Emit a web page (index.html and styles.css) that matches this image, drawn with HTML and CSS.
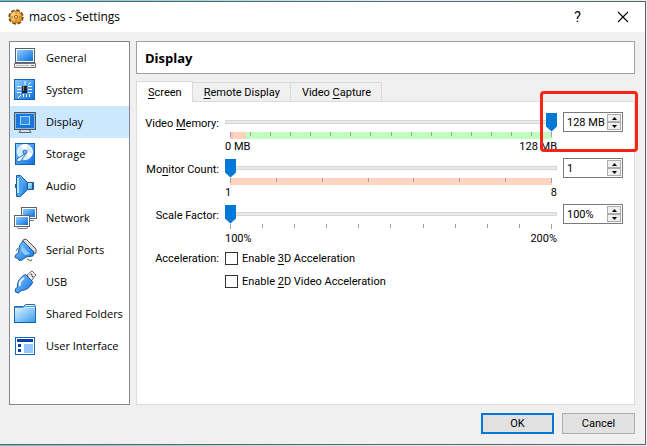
FILE: index.html
```html
<!DOCTYPE html>
<html lang="en">
<head>
    <meta charset="UTF-8">
    <meta name="viewport" content="width=device-width, initial-scale=1.0">
    <title>macos - Settings</title>
    <link rel="stylesheet" href="styles.css">
</head>
<body>
    <svg class="defs" width="0" height="0" aria-hidden="true">
        <defs>
            <linearGradient id="blue" x1="0" y1="0" x2="1" y2="1">
                <stop offset="0" stop-color="#8fccff"/>
                <stop offset="1" stop-color="#0b6fe0"/>
            </linearGradient>
            <linearGradient id="sky" x1="0" y1="0" x2="1" y2="1">
                <stop offset="0" stop-color="#d8f1ff"/>
                <stop offset="1" stop-color="#3d9cf0"/>
            </linearGradient>
            <linearGradient id="gold" x1="0" y1="0" x2="1" y2="1">
                <stop offset="0" stop-color="#ffe9a0"/>
                <stop offset="1" stop-color="#e88a00"/>
            </linearGradient>
        </defs>
    </svg>
    <div class="window">
        <header class="titlebar">
            <svg class="app-icon" width="16" height="16" viewBox="0 0 16 16">
                <circle cx="8" cy="8" r="6.800" fill="none" stroke="#7d4a10" stroke-width="1.800" stroke-dasharray="3.600 1.740"/>
                <circle cx="8" cy="8" r="6" fill="url(#gold)" stroke="#a8691a"/>
                <circle cx="8" cy="8" r="1.500" fill="#fff" stroke="#8a5412"/>
                <path d="M8 3v2M3 8h2M11 8h2M8 11v2" stroke="#b87414"/>
            </svg>
            <h1>macos - Settings</h1>
            <button class="title-button help" type="button" aria-label="Help">?</button>
            <button class="title-button" type="button" aria-label="Close">
                <svg width="12" height="12" viewBox="0 0 12 12"><path d="M1 1l10 10M11 1L1 11" stroke="#000" stroke-width="1.100"/></svg>
            </button>
        </header>
        <div class="content">
            <nav class="sidebar">
                <a href="#general">
                    <svg width="24" height="24" viewBox="0 0 24 24">
                        <rect x="2.500" y="2.500" width="19" height="14" fill="#fff" stroke="#566069"/>
                        <rect x="4" y="4" width="16" height="11" fill="url(#blue)"/>
                        <path d="M1.500 17.500h21v4h-21z" fill="#f2f2ee" stroke="#6c706e"/>
                        <path d="M3 19.500h13" stroke="#b8bab4"/><path d="M18 19.500h3" stroke="#777"/>
                    </svg>
                    General
                </a>
                <a href="#system">
                    <svg width="24" height="24" viewBox="0 0 24 24">
                        <rect x="1.500" y="1.500" width="20" height="20" fill="url(#blue)" stroke="#1263b4"/>
                        <rect x="9" y="8" width="5" height="7" fill="#222"/><path d="M10.500 8v5" stroke="#777"/>
                        <path d="M4 8.500h4M4 11.500h4M4 14.500h4M15 8.500h4M15 11.500h4M15 14.500h4M10.500 16v3M13.500 16v3M8 17l-3 3M16.500 16v3M12 3v4M18 4l-3 3" stroke="#fff"/>
                    </svg>
                    System
                </a>
                <a class="selected" href="#display">
                    <svg width="24" height="24" viewBox="0 0 24 24">
                        <path d="M6 22.500h12l-2-3H8z" fill="#ddd" stroke="#50677c"/>
                        <rect x="1.500" y="2.500" width="21" height="17" fill="#9bb6cc" stroke="#3d5870"/>
                        <rect x="3" y="4" width="18" height="14" fill="#1777df"/>
                        <rect x="7.500" y="6.500" width="9" height="8" fill="#2f8ef0" stroke="#a9d5ff"/>
                    </svg>
                    Display
                </a>
                <a href="#storage">
                    <svg width="24" height="24" viewBox="0 0 24 24">
                        <rect x="2.500" y="1.500" width="19" height="21" fill="url(#blue)" stroke="#1261b0"/>
                        <circle cx="12" cy="10" r="7.500" fill="#cfeaff" stroke="#fff"/>
                        <path d="M12 10l-4-6a7 7 0 0 1 7-1zM12 10l4 6a7 7 0 0 0 3-5z" fill="#fff"/>
                        <circle cx="12" cy="10" r="2" fill="#80bdf2" stroke="#276eb5"/>
                        <path d="M13 11l-5 8-4 1v-3l6-4z" fill="#eef8ff" stroke="#2a78c2"/>
                    </svg>
                    Storage
                </a>
                <a href="#audio">
                    <svg width="24" height="24" viewBox="0 0 24 24">
                        <path d="M14 8.500h6.500v7H14z" fill="url(#sky)" stroke="#195d9d"/>
                        <path d="M19.500 8v8" stroke="#195d9d"/>
                        <path d="M3.500 1.500h4l7 7v7l-7 7h-4z" fill="url(#blue)" stroke="#195d9d"/>
                        <path d="M4 2h3l2 4v12l-2 4H4z" fill="#4ba4f2"/>
                        <path d="M5 4v15" fill="none" stroke="#b9e1ff" stroke-width="2"/>
                        <path d="M2.500 10v4" stroke="#195d9d"/>
                    </svg>
                    Audio
                </a>
                <a href="#network">
                    <svg width="24" height="24" viewBox="0 0 24 24">
                        <rect x="8.500" y="1.500" width="15" height="11" fill="#fff" stroke="#5d656b"/>
                        <rect x="10" y="3" width="12" height="8" fill="url(#blue)"/>
                        <path d="M17 14.500h4" stroke="#777"/>
                        <rect x="1.500" y="9.500" width="15" height="11" fill="#fff" stroke="#5d656b"/>
                        <rect x="3" y="11" width="12" height="8" fill="url(#blue)"/>
                        <path d="M4 21.500l2 1h7l2-1" fill="none" stroke="#777"/>
                    </svg>
                    Network
                </a>
                <a href="#serial">
                    <svg width="24" height="24" viewBox="0 0 24 24">
                        <path d="M10 2l3-1 10 10v4l-2 1-12-11z" fill="#ddd" stroke="#555"/>
                        <path d="M10 3l11 11-1 4-7 1-4 3-3 .5-1-2-3-1 .5-2.500 3-2.500 1-7z" fill="url(#blue)" stroke="#155a9f"/>
                        <path d="M9 8l8 8-5 1-4-4z" fill="#8dcbff"/>
                        <path d="M14 21l4 2 1-2M3 13l2-3" fill="none" stroke="#666"/>
                    </svg>
                    Serial Ports
                </a>
                <a href="#usb">
                    <svg width="24" height="24" viewBox="0 0 24 24">
                        <path d="M14 5l5-4 4 4-5 6z" fill="#f5f5f5" stroke="#666"/>
                        <path d="M18 4l1 1M20 6l-1 1" stroke="#333" stroke-width="1.500"/>
                        <path d="M12.500 4.500l7 7c0 4-6 9-11 9l-3 2.500-3-1 0-3 2-2c-1-5 4-11 8-12.500z" fill="url(#blue)" stroke="#155a9f"/>
                        <path d="M11 8c-3 2-5 5-4 8" fill="none" stroke="#e9f8ff" stroke-width="2"/>
                    </svg>
                    USB
                </a>
                <a href="#folders">
                    <svg width="24" height="24" viewBox="0 0 24 24">
                        <path d="M1.500 20.500v-16h9l2-2h9l1 2v16z" fill="#d9f1ff" stroke="#1c6cb3"/>
                        <path d="M2 6h20v14H2z" fill="url(#sky)"/>
                        <path d="M2 5.500h8l2-1h10" fill="none" stroke="#4e9ddb"/>
                        <path d="M1 20.500h22" stroke="#0a62ae"/>
                    </svg>
                    Shared Folders
                </a>
                <a href="#interface">
                    <svg width="24" height="24" viewBox="0 0 24 24">
                        <rect x="2.500" y="3.500" width="19" height="17" fill="#fff" stroke="#1267c8"/>
                        <path d="M4 5h16v3H4z" fill="#0541a5"/>
                        <path d="M5 10h3v3H5zM5 15h3v3H5z" fill="#0541a5"/>
                        <path d="M11 10h9v9h-9z" fill="#94c5ff"/>
                    </svg>
                    User Interface
                </a>
            </nav>
            <main class="main">
                <h2>Display</h2>
                <div class="tabs" role="tablist">
                    <button class="tab active" type="button" role="tab" aria-selected="true"><u>S</u>creen</button>
                    <button class="tab" type="button" role="tab" aria-selected="false"><u>R</u>emote Display</button>
                    <button class="tab" type="button" role="tab" aria-selected="false">Video <u>C</u>apture</button>
                </div>
                <form class="panel">
                    <label class="name" for="memory">Video <u>M</u>emory:</label>
                    <div class="slider">
                        <input id="memory" type="range" min="0" max="128" value="128">
                        <div class="scale memory">
                            <i></i><i></i><i></i><i></i><i></i><i></i><i></i><i></i><i></i><i></i><i></i><i></i><i></i><i></i><i></i><i></i><i></i>
                        </div>
                        <div class="limits"><span>0 MB</span><span>128 MB</span></div>
                    </div>
                    <div class="spin marked">
                        <input type="text" value="128 MB" aria-label="Video memory size">
                        <div class="arrows">
                            <button type="button" aria-label="Increase"><svg width="5" height="3"><path d="M0 3h5L2.500 0z"/></svg></button>
                            <button type="button" aria-label="Decrease"><svg width="5" height="3"><path d="M0 0h5L2.500 3z"/></svg></button>
                        </div>
                    </div>

                    <label class="name" for="monitors">Mo<u>n</u>itor Count:</label>
                    <div class="slider">
                        <input id="monitors" type="range" min="1" max="8" value="1">
                        <div class="scale monitors">
                            <i></i><i></i><i></i><i></i><i></i><i></i><i></i><i></i>
                        </div>
                        <div class="limits"><span>1</span><span>8</span></div>
                    </div>
                    <div class="spin">
                        <input type="text" value="1" aria-label="Number of monitors">
                        <div class="arrows">
                            <button type="button" aria-label="Increase"><svg width="5" height="3"><path d="M0 3h5L2.500 0z"/></svg></button>
                            <button type="button" aria-label="Decrease"><svg width="5" height="3"><path d="M0 0h5L2.500 3z"/></svg></button>
                        </div>
                    </div>

                    <label class="name" for="factor">Scale Factor:</label>
                    <div class="slider">
                        <input id="factor" type="range" min="100" max="200" value="100">
                        <div class="scale">
                            <i></i><i></i><i></i><i></i><i></i><i></i><i></i><i></i><i></i><i></i><i></i>
                        </div>
                        <div class="limits"><span>100%</span><span>200%</span></div>
                    </div>
                    <div class="spin">
                        <input type="text" value="100%" aria-label="Scale factor percent">
                        <div class="arrows">
                            <button type="button" aria-label="Increase"><svg width="5" height="3"><path d="M0 3h5L2.500 0z"/></svg></button>
                            <button type="button" aria-label="Decrease"><svg width="5" height="3"><path d="M0 0h5L2.500 3z"/></svg></button>
                        </div>
                    </div>

                    <span class="name accel">Acceleration:</span>
                    <div class="checks">
                        <label><input type="checkbox">Enable <u>3</u>D Acceleration</label>
                        <label><input type="checkbox">Enable <u>2</u>D Video Acceleration</label>
                    </div>
                </form>
            </main>
        </div>
        <footer class="footer">
            <button class="ok" type="button">OK</button>
            <button type="button">Cancel</button>
        </footer>
    </div>
</body>
</html>
```
FILE: styles.css
```css
* {
    margin: 0;
    padding: 0;
    box-sizing: border-box;
}

body {
    height: 100vh;
    padding: 1px 1px 1px 0;
    background: linear-gradient(90deg, #62c4d4, #d5f3f3 60%, #e4eeee);
    font-family: Roboto, "Noto Sans", sans-serif;
    font-size: 11px;
    line-height: 16px;
    color: #000;
}

.defs {
    position: absolute;
}

button, input {
    font: inherit;
    color: inherit;
}

u {
    text-underline-offset: 2px;
}

.window {
    height: 100%;
    display: flex;
    flex-direction: column;
    background: #f0f0f0;
    border: 1px solid #5c6468;
    border-left: 0;
}

/* title bar */
.titlebar {
    height: 30px;
    display: flex;
    align-items: center;
    background: #fff;
    padding-left: 8px;
}

.titlebar h1 {
    flex: 1;
    margin-left: 5px;
    font-family: "Open Sans", sans-serif;
    font-size: 12px;
    font-weight: normal;
}

.title-button {
    width: 45px;
    height: 30px;
    border: none;
    background: none;
    display: flex;
    align-items: center;
    justify-content: center;
}

.help {
    font-size: 14px;
}

.content {
    flex: 1;
    display: flex;
    gap: 6px;
    padding: 9px 10px 0 9px;
}

/* category list */
.sidebar {
    width: 121px;
    background: #fff;
    border: 1px solid #828790;
}

.sidebar a {
    display: flex;
    align-items: center;
    gap: 9px;
    height: 32px;
    padding-left: 3px;
    font-family: "Open Sans", sans-serif;
    line-height: 18px;
    color: #000;
    text-decoration: none;
    white-space: nowrap;
}

.sidebar svg {
    flex: none;
}

.sidebar .selected {
    background: #cce8ff;
}

.main {
    flex: 1;
    min-width: 0;
    display: flex;
    flex-direction: column;
}

.main h2 {
    height: 33px;
    padding-left: 8px;
    background: #fff;
    border: 1px solid #a0a0a0;
    font-family: "Open Sans", sans-serif;
    font-size: 13px;
    line-height: 33px;
}

/* tabs */
.tabs {
    display: flex;
    align-items: flex-end;
    margin-top: 7px;
}

.tab {
    height: 19px;
    padding: 2px 10px 0 11px;
    background: #f0f0f0;
    border: 1px solid #d9d9d9;
    border-left: 0;
    border-bottom: 0;
}

.tab.active {
    height: 21px;
    background: #fff;
    border-left: 1px solid #d9d9d9;
    margin-bottom: -1px;
    z-index: 1;
}

.panel {
    flex: 1;
    display: grid;
    grid-template-columns: 82px 1fr 60px;
    grid-template-rows: 46px 46px 46px auto;
    column-gap: 6px;
    padding: 10px 11px 0 0;
    background: #fff;
    border: 1px solid #dcdcdc;
}

.name {
    line-height: 23px;
    text-align: right;
    white-space: nowrap;
}

/* sliders */
.slider input {
    display: block;
    width: 100%;
    height: 19px;
    appearance: none;
    background: none;
}

.slider input::-webkit-slider-runnable-track {
    height: 4px;
    background: #e7eaea;
    box-shadow: inset 0 0 0 1px #d6d6d6;
}

.slider input::-webkit-slider-thumb {
    appearance: none;
    width: 11px;
    height: 19px;
    margin-top: -7px;
    background: #0078d7;
    clip-path: polygon(0 0, 100% 0, 100% 14px, 50% 100%, 0 14px);
}

.scale {
    display: flex;
    justify-content: space-between;
    height: 7px;
    margin: 1px 5px 0 5px;
}

.scale i {
    width: 1px;
    height: 4px;
    background: #a0a0a0;
}

.scale i:first-child, .scale i:last-child {
    height: 5px;
}

.memory {
    background: linear-gradient(90deg, #ffc0c0 0 1%, #ffd3c0 1% 5%, #c0ffc0 5%);
}

.monitors {
    background: #ffd3c0;
}

.limits {
    display: flex;
    justify-content: space-between;
    line-height: 16px;
}

/* number boxes */
.spin {
    position: relative;
    display: flex;
    height: 20px;
    padding: 1px;
    background: #fff;
    border: 1px solid #7a7a7a;
}

.spin input {
    flex: 1;
    min-width: 0;
    padding: 2px 0 0 2px;
    border: none;
    background: none;
}

.arrows {
    width: 14px;
    display: flex;
    flex-direction: column;
}

.arrows button {
    flex: 1;
    min-height: 0;
    display: flex;
    align-items: center;
    justify-content: center;
    background: #f0f0f0;
    border: 1px solid #acacac;
}

.marked::after {
    content: "";
    position: absolute;
    inset: -22px -16px -21px -24px;
    border: 3px solid #fb2316;
    border-radius: 4px;
    pointer-events: none;
}

/* check boxes */
.accel {
    line-height: 18px;
}

.checks {
    grid-column: 2 / 4;
    display: flex;
    flex-direction: column;
    align-items: flex-start;
    gap: 6px;
}

.checks label {
    display: flex;
    align-items: center;
    height: 17px;
    line-height: 18px;
    white-space: pre;
}

.checks input {
    appearance: none;
    width: 13px;
    height: 13px;
    margin-right: 4px;
    background: #fff;
    border: 1px solid #333;
}

/* dialog buttons */
.footer {
    display: flex;
    justify-content: flex-end;
    gap: 8px;
    padding: 8px 10px 10px;
}

.footer button {
    width: 73px;
    height: 21px;
    background: #e1e1e1;
    border: 1px solid #adadad;
}

.footer .ok {
    border: 2px solid #0078d7;
}
```
